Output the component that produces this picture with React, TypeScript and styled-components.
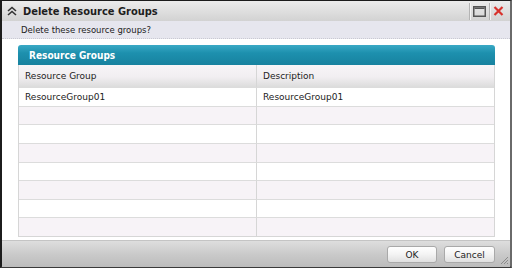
import React from "react";
import styled, { createGlobalStyle } from "styled-components";

const GlobalStyle = createGlobalStyle`
  html, body { margin: 0; padding: 0; background: #ffffff; }
  body { font-family: "DejaVu Sans", Verdana, sans-serif; }
  * { box-sizing: border-box; }
`;

const Dialog = styled.div`
  position: relative;
  width: 512px;
  height: 268px;
  display: flex;
  flex-direction: column;
  border-top: 1px solid #1c1c1c;
  border-left: 2px solid #1c1c1c;
  border-right: 2px solid #6a6a6a;
  border-bottom: 2px solid #3a3a3a;
  background: #ffffff;
`;

const TitleBar = styled.div`
  height: 20px;
  flex: none;
  display: flex;
  align-items: center;
  padding-left: 5px;
  background: linear-gradient(#ececec, #d2d2d2);
`;

const Title = styled.div`
  margin-left: 6px;
  font-family: "DejaVu Sans Condensed", "DejaVu Sans", sans-serif;
  font-stretch: condensed;
  font-weight: bold;
  font-size: 11px;
  color: #1e1e1e;
  flex: 1;
`;

const TitleTools = styled.div`
  display: flex;
  align-items: center;
  height: 100%;
  padding-right: 6px;
`;

const ToolSep = styled.div`
  width: 1px;
  height: 17px;
  background: #b4b4b4;
  box-shadow: 1px 0 0 #f4f4f4;
  margin: 0 3px;
`;

const SubHeader = styled.div`
  height: 18px;
  flex: none;
  display: flex;
  align-items: center;
  padding-left: 19px;
  background: #e6e6ee;
  border-bottom: 1px dotted #c9c9d2;
  font-size: 8.5px;
  color: #222;
`;

const Content = styled.div`
  flex: 1;
  padding: 6px 15px 0 16px;
`;

const Panel = styled.div`
  display: flex;
  flex-direction: column;
`;

const PanelHeader = styled.div`
  height: 20px;
  display: flex;
  align-items: center;
  padding-left: 11px;
  border-radius: 3px 3px 0 0;
  background: linear-gradient(#3aa9c5, #1d90ae 40%, #17829f);
  color: #ffffff;
  font-family: "DejaVu Sans Condensed", "DejaVu Sans", sans-serif;
  font-stretch: condensed;
  font-weight: bold;
  font-size: 10px;
`;

const Table = styled.div`
  border: 1px solid #d6d6d6;
  border-top: none;
  display: grid;
  grid-template-columns: 238px 1fr;
`;

const HeadCell = styled.div<{ $last?: boolean }>`
  height: 22px;
  display: flex;
  align-items: center;
  padding-left: 6px;
  background: linear-gradient(#f7f5f7, #f1eef1 55%, #dcdcdc);
  border-right: ${(p) => (p.$last ? "none" : "1px solid #d6d6d6")};
  font-size: 9px;
  color: #222;
`;

const Cell = styled.div<{ $alt?: boolean; $last?: boolean }>`
  height: 18.625px;
  display: flex;
  align-items: center;
  padding-left: 6px;
  background: ${(p) => (p.$alt ? "#f7f3f7" : "#ffffff")};
  border-top: 1px solid #dcdcdc;
  border-right: ${(p) => (p.$last ? "none" : "1px solid #d6d6d6")};
  font-size: 9px;
  color: #222;
`;

const Footer = styled.div`
  margin-top: 3px;
  height: 27px;
  flex: none;
  display: flex;
  align-items: center;
  justify-content: flex-end;
  gap: 7px;
  padding-right: 15px;
  background: linear-gradient(#dedede, #cacaca 50%, #bcbcbc);
  border-top: 1px solid #c4c4c4;
`;

const Button = styled.button<{ $w: number }>`
  width: ${(p) => p.$w}px;
  height: 17px;
  margin-top: 1px;
  padding: 0;
  border: 1px solid #a9a9a9;
  border-radius: 3px;
  background: linear-gradient(#ffffff, #f3f3f3 50%, #e0e0e0);
  font-family: "DejaVu Sans", sans-serif;
  font-size: 9px;
  color: #222;
`;

const Grip = styled.svg`
  position: absolute;
  right: 1px;
  bottom: 1px;
`;

const rows = Array.from({ length: 8 }, (_, i) =>
  i === 0 ? ["ResourceGroup01", "ResourceGroup01"] : ["", ""]
);

export default function App() {
  return (
    <>
      <GlobalStyle />
      <Dialog>
        <TitleBar>
          <svg width="10" height="10" viewBox="0 0 10 10">
            <path d="M1 5 L5 1.5 L9 5 M1 9 L5 5.5 L9 9" stroke="#333" strokeWidth="1.6" fill="none" />
          </svg>
          <Title>Delete Resource Groups</Title>
          <TitleTools>
            <ToolSep />
            <svg width="13" height="11" viewBox="0 0 13 11">
              <rect x="0.75" y="0.75" width="11.5" height="9.5" fill="none" stroke="#555" strokeWidth="1.5" />
              <rect x="1.5" y="1.5" width="10" height="1.5" fill="#555" />
            </svg>
            <ToolSep />
            <svg width="11" height="10" viewBox="0 0 11 10">
              <path d="M1.5 1 L9.5 9 M9.5 1 L1.5 9" stroke="#d8322c" strokeWidth="2.2" fill="none" />
            </svg>
          </TitleTools>
        </TitleBar>
        <SubHeader>Delete these resource groups?</SubHeader>
        <Content>
          <Panel>
            <PanelHeader>Resource Groups</PanelHeader>
            <Table>
              <HeadCell>Resource Group</HeadCell>
              <HeadCell $last>Description</HeadCell>
              {rows.map((r, i) => (
                <React.Fragment key={i}>
                  <Cell $alt={i % 2 === 1}>{r[0]}</Cell>
                  <Cell $alt={i % 2 === 1} $last>{r[1]}</Cell>
                </React.Fragment>
              ))}
            </Table>
          </Panel>
        </Content>
        <Footer>
          <Button $w={50}>OK</Button>
          <Button $w={51}>Cancel</Button>
        </Footer>
        <Grip width="10" height="10" viewBox="0 0 10 10">
          <path d="M9 2 L2 9 M9 5 L5 9 M9 8 L8 9" stroke="#8a8a8a" strokeWidth="1" fill="none" />
        </Grip>
      </Dialog>
    </>
  );
}
